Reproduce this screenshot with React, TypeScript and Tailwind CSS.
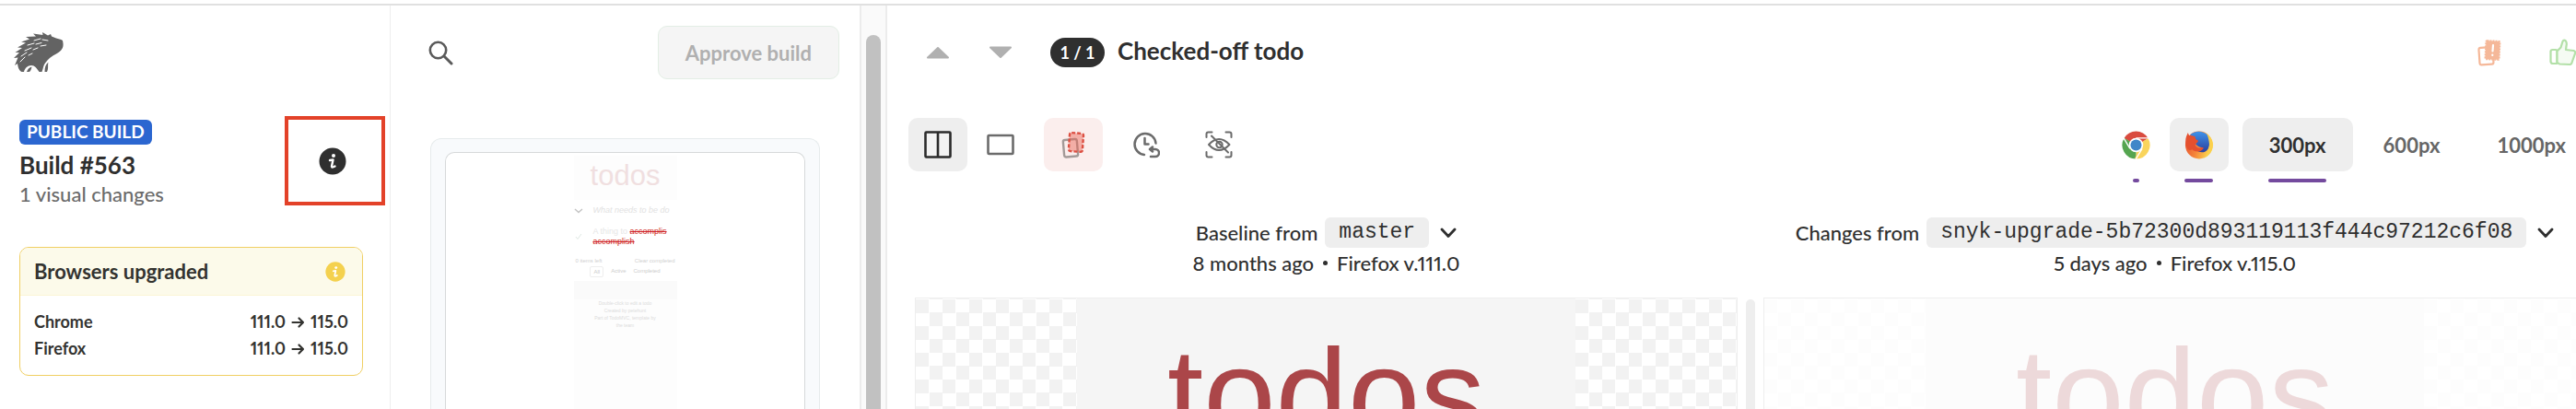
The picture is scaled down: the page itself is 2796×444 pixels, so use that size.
import type { ReactNode } from 'react';
import { clsx } from 'clsx';

const upgrades = [
  { browser: 'Chrome', from: '111.0', to: '115.0' },
  { browser: 'Firefox', from: '111.0', to: '115.0' },
];

const CHECKER =
  'bg-[repeating-conic-gradient(#ffffff_0%_25%,#f2f2f2_0%_50%)] bg-[length:29px_29px] bg-[position:0_1px]';

/* ---------- icons ---------- */

function HedgehogLogo() {
  return (
    <svg viewBox="0 0 54 43" className="h-[43px] w-[54px]" aria-hidden="true">
      <path
        fill="#636363"
        d="M53 9 C51 7 48 7.500 46 6.500 L41 4.500 L40 2 L37 3.500 L31 0 L31.500 3 L21 1.500 L24 4.500 L13 5 L17 7.500 L8 10.500 L13 11.500 L4 16.500 L9 17 L1.500 22 L6 22 L0 28 L4.500 27.500 L1 36 L4 34 C4.500 37 5 41 8.500 43 L11 43 C12 39 15 36 19 36 C23 36 24.500 39 27.500 43 L30.500 43 C32 39 32 36 34 33.500 C37 29 41 26 46 23.500 C52 20 54 17 53.500 12 Z"
      />
      <path fill="#636363" d="M14 43 C15 40 17 38 19.500 37.500 C19 40 18 43 16.500 43 Z M33.500 43 C33.500 38 34.500 35 37.500 32.500 C36.500 36 38 39 36 43 Z" />
      <path
        stroke="#fff"
        strokeWidth="1"
        strokeLinecap="round"
        d="M22 9 L29 7 M31 8 L37 9 M15 14 L22 12 M24 13 L30 11.500 M12 20 L19 17 M21 19 L26 17 M8 26 L14 22 M7 32 L12 27 M16 25 L20 23 M29 15 L35 14"
      />
    </svg>
  );
}

function InfoIcon({ className, fill }: { className: string; fill: string }) {
  return (
    <svg viewBox="0 0 30 30" className={className} aria-hidden="true">
      <circle cx="15" cy="15" r="14.500" fill={fill} />
      <circle cx="16" cy="9" r="2" fill="#fff" />
      <path d="M12 14 L15.500 13.500 L14 20.500 Q14 22.500 17.500 20.500" fill="none" stroke="#fff" strokeWidth="2.400" strokeLinecap="round" strokeLinejoin="round" />
    </svg>
  );
}

function SearchIcon() {
  return (
    <svg viewBox="0 0 27 27" className="h-[27px] w-[27px]" fill="none" stroke="#5a5a5a" aria-hidden="true">
      <circle cx="10.500" cy="10.500" r="8.700" strokeWidth="2.600" />
      <path d="M17 17 L25 25" strokeWidth="3" strokeLinecap="round" />
    </svg>
  );
}

function TriangleIcon({ down }: { down?: boolean }) {
  return (
    <svg viewBox="0 0 26 14" className="h-[14px] w-[26px]" fill="#b0b0b0" stroke="#b0b0b0" strokeWidth="2" strokeLinejoin="round" aria-hidden="true">
      {down ? <path d="M2 1.500 H24 L13 12 Z" /> : <path d="M2 12.500 H24 L13 2 Z" />}
    </svg>
  );
}

function ChevronIcon() {
  return (
    <svg viewBox="0 0 18 12" className="h-[12px] w-[18px]" fill="none" stroke="#2f2f2f" strokeWidth="2.800" strokeLinecap="round" strokeLinejoin="round" aria-hidden="true">
      <path d="M2 2 L9 9.500 L16 2" />
    </svg>
  );
}

function SplitIcon() {
  return (
    <svg viewBox="0 0 30 30" className="h-[30px] w-[30px]" aria-hidden="true">
      <rect x="1.500" y="1.500" width="27" height="27" rx="1" fill="#fff" fillOpacity="0.300" stroke="#2b2b2b" strokeWidth="2.600" />
      <path d="M15 1.500 V28.500" stroke="#2b2b2b" strokeWidth="2.600" />
    </svg>
  );
}

function SingleIcon() {
  return (
    <svg viewBox="0 0 30 30" className="h-[30px] w-[30px]" aria-hidden="true">
      <rect x="1.500" y="5" width="27" height="20" rx="1" fill="none" stroke="#6b6b6b" strokeWidth="2.600" />
    </svg>
  );
}

function DiffIcon() {
  return (
    <svg viewBox="0 0 30 30" className="h-[30px] w-[30px]" aria-hidden="true">
      <rect x="4.500" y="9.500" width="15" height="18.500" rx="2" fill="none" stroke="#a39a98" strokeWidth="2.400" transform="rotate(-5 12 19)" />
      <rect x="10.500" y="2.500" width="15" height="20" rx="2" fill="#e8604f" fillOpacity="0.450" stroke="#dc4f42" strokeWidth="2.400" strokeDasharray="4 2" transform="rotate(4 18 12)" />
    </svg>
  );
}

function HistoryIcon() {
  return (
    <svg viewBox="0 0 30 30" className="h-[30px] w-[30px]" fill="none" stroke="#6b6b6b" strokeWidth="2.500" strokeLinecap="round" strokeLinejoin="round" aria-hidden="true">
      <path d="M13 26 A11.500 11.500 0 1 1 25.500 13.500" />
      <path d="M13.500 8 V14.500 H17.500" />
      <path d="M22 17.500 L19 20 L22 22.500 M19 20 H25 A3.600 3.600 0 0 1 25 28 H20" />
    </svg>
  );
}

function HiddenRegionIcon() {
  return (
    <svg viewBox="0 0 30 30" className="h-[30px] w-[30px]" fill="none" stroke="#6b6b6b" strokeWidth="2" strokeLinecap="round" strokeLinejoin="round" aria-hidden="true">
      <path d="M1.500 7 V3.500 Q1.500 1.500 3.500 1.500 H7.500 M22.500 1.500 H26.500 Q28.500 1.500 28.500 3.500 V7 M28.500 23 V26.500 Q28.500 28.500 26.500 28.500 H22.500 M7.500 28.500 H3.500 Q1.500 28.500 1.500 26.500 V23" />
      <path d="M4 15 Q15 3 26.500 15 Q15 27 4 15 Z" />
      <circle cx="15.500" cy="15" r="3.200" />
      <path d="M7 5.500 L25 23.500" />
    </svg>
  );
}

function ChromeIcon() {
  return (
    <svg viewBox="0 0 32 32" className="h-[31px] w-[31px]" aria-hidden="true">
      <path fill="#d94b3f" d="M16 16 L2.600 8.200 A15.500 15.500 0 0 1 29.400 8.200 Z" />
      <path fill="#f9d45c" d="M16 16 L29.400 8.200 A15.500 15.500 0 0 1 16 31.500 Z" />
      <path fill="#55a550" d="M16 16 V31.500 A15.500 15.500 0 0 1 2.600 8.200 Z" />
      <path fill="#d94b3f" d="M16 8 H29.400 L22 13 Z" />
      <path fill="#f9d45c" d="M23 16 L16 31.500 L14.500 31 L20 20 Z" />
      <path fill="#55a550" d="M2.600 8.200 L9.500 20 L16 22 V16 Z" />
      <circle cx="16" cy="16" r="8" fill="#fff" />
      <path stroke="#fff" strokeWidth="1.400" d="M16 8.200 H30 M22.800 20 L15.500 32 M9.200 20 L2 7.800" />
      <circle cx="16" cy="16" r="6.200" fill="#3f86c8" />
    </svg>
  );
}

function FirefoxIcon() {
  return (
    <svg viewBox="0 0 32 32" className="h-[31px] w-[32px]" aria-hidden="true">
      <defs>
        <linearGradient id="ff-body" x1="0" y1="0" x2="1" y2="0.300">
          <stop offset="0" stopColor="#e4482f" />
          <stop offset="0.550" stopColor="#f5863a" />
          <stop offset="1" stopColor="#fbd350" />
        </linearGradient>
        <linearGradient id="ff-globe" x1="0" y1="0" x2="0" y2="1">
          <stop offset="0" stopColor="#3f93ea" />
          <stop offset="1" stopColor="#2a3f9d" />
        </linearGradient>
      </defs>
      <circle cx="16" cy="16" r="15.500" fill="url(#ff-body)" />
      <path fill="url(#ff-globe)" d="M6 4.500 C11 -0.500 20 -0.500 25 4.500 C28 8 28.500 15 26 20 C23 25 17 25 13 22 C17 22.500 19 20 20 18.500 C17 19 14 17 12 15 L14 11 C10 10 8 7 6 4.500 Z" />
      <path fill="#e4502f" d="M0.800 12 C0.500 8 2 5 3.500 2 C4 4 4.500 5 5.500 5.500 C8 5 10 5.500 12 7 C11 8.500 12 10 15 11 C15 13 12 14 11.500 15.500 C12 18 14.500 19.500 17 19 C19 18 20.500 18.500 21 19.500 C18 24 12 24.500 8 21 C4 24 1 18 0.800 12 Z" />
      <path fill="#fbd04c" d="M24.500 3 C30 7 31.500 13 31 18 C29.500 25 25 29 21 30.500 C27 25 28 18 27 12 C26.500 8.500 25.500 5 24.500 3 Z" />
    </svg>
  );
}

function RequestChangesIcon() {
  return (
    <svg viewBox="0 0 30 30" className="h-[30px] w-[30px]" aria-hidden="true">
      <rect x="4" y="9.500" width="15" height="18.500" rx="2" fill="none" stroke="#f5b899" strokeWidth="2.200" transform="rotate(-4 12 19)" />
      <rect x="11" y="2.500" width="15" height="20" rx="1" fill="#f5b899" stroke="#f5b899" strokeWidth="2" strokeDasharray="2 1" transform="rotate(3 18 12)" />
      <path d="M19 7 L18.500 13.500 M18.300 17.500 V18" stroke="#fff" strokeWidth="2.200" strokeLinecap="round" />
    </svg>
  );
}

function ThumbUpIcon() {
  return (
    <svg viewBox="0 0 30 30" className="h-[30px] w-[30px]" fill="none" stroke="#b3e0a8" strokeWidth="2.200" strokeLinecap="round" strokeLinejoin="round" aria-hidden="true">
      <path d="M1.500 14 Q1.500 12 3.500 12 H7 Q8.500 12 8.500 14 V27 H4 Q1.500 27 1.500 24.500 Z" />
      <path fill="#f5fbf3" d="M8.500 13.500 L12.500 9.500 L14.500 3 Q15.500 1 17.500 2 Q19.500 4 18.500 8 L18 12 L26.500 13 Q28.500 13.500 28 16 L24.500 26 Q24 28 22 28 L11 27.500 L8.500 25.500 Z" />
    </svg>
  );
}

/* ---------- building blocks ---------- */

interface ToolButtonProps {
  label: string;
  tone?: 'plain' | 'active' | 'danger';
  className?: string;
  children: ReactNode;
}

function ToolButton({ label, tone = 'plain', className, children }: ToolButtonProps) {
  return (
    <button
      type="button"
      aria-label={label}
      className={clsx(
        'flex h-[58px] w-16 shrink-0 items-center justify-center rounded-[10px]',
        tone === 'active' && 'bg-[#eeeeee]',
        tone === 'danger' && 'bg-[#fbeeed]',
        className,
      )}
    >
      {children}
    </button>
  );
}

function WidthButton({ label, active }: { label: string; active?: boolean }) {
  return (
    <div className="flex flex-col items-center gap-2">
      <button
        type="button"
        className={clsx(
          'h-[58px] rounded-[10px] px-[29px] text-[22px] font-bold',
          active ? 'bg-[#eeeeee] text-[#2f2f2f]' : 'text-[#666666]',
        )}
      >
        {label}
      </button>
      {active && <span className="h-1 w-[63px] rounded-full bg-[#744a9e]" />}
    </div>
  );
}

interface SnapshotPaneProps {
  title: string;
  branch: string;
  age: string;
  browser: string;
  faded?: boolean;
}

function SnapshotPane({ title, branch, age, browser, faded }: SnapshotPaneProps) {
  const checker = clsx('flex-1', CHECKER, faded && 'opacity-50');

  return (
    <section className="flex min-w-0 flex-1 flex-col">
      <div className="flex flex-col items-center text-[22px] font-medium text-[#2f2f2f]">
        <div className="flex h-[33px] items-center">
          <span className="whitespace-nowrap">{title}</span>
          <code className="ml-2 flex h-[33px] items-center rounded-md bg-[#eeeeee] px-[15px] font-['Liberation_Mono',monospace] text-[23px] font-normal">
            {branch}
          </code>
          <button type="button" aria-label={`Choose branch, ${branch}`} className="ml-3">
            <ChevronIcon />
          </button>
        </div>
        <p className="flex h-8 items-center gap-[10px] whitespace-nowrap proportional-nums">
          <span>{age}</span>
          <span className="h-[5px] w-[5px] rounded-full bg-[#2f2f2f]" />
          <span>{browser}</span>
        </p>
      </div>

      <div className="mt-[22px] flex flex-1 border border-[#eeeeee]">
        <div className={clsx('flex flex-1', faded && 'opacity-20')}>
          <div className={checker} />
          <div className="w-[541px] bg-[#f5f5f5] pt-[24px] text-center font-['Liberation_Sans',sans-serif] text-[141px] leading-[160px] text-[#ab4649]">
            todos
          </div>
          <div className={checker} />
        </div>
      </div>
    </section>
  );
}

function SnapshotThumbnail() {
  return (
    <div className="w-[112px] bg-[#fdfdfd] font-['Liberation_Sans',sans-serif]">
      <div className="h-12 pt-[6px] text-center text-[31px] leading-8 text-[#f0dfe0]">todos</div>
      <div className="flex h-6 items-center gap-[11px] bg-white text-[9px] italic text-[#e2e2e2]">
        <svg viewBox="0 0 10 6" className="h-[6px] w-[10px]" fill="none" stroke="#c4c4c4" strokeWidth="1.500" aria-hidden="true">
          <path d="M1 1 L5 4.500 L9 1" />
        </svg>
        <span className="whitespace-nowrap">What needs to be do</span>
      </div>
      <div className="flex h-8 items-center gap-[11px] bg-white text-[9px] leading-[11px]">
        <svg viewBox="0 0 10 10" className="h-[10px] w-[10px]" fill="none" stroke="#dfe8e3" aria-hidden="true">
          <path d="M2 5 L4 7.500 L8 2" />
        </svg>
        <p className="whitespace-nowrap">
          <span className="text-[#e6e6e6]">A thing to </span>
          <span className="text-[#cf1f24] line-through">accomplis</span>
          <br />
          <span className="text-[#cf1f24] line-through">accomplish</span>
        </p>
      </div>
      <div className="flex justify-between bg-white px-[2px] pt-1 text-[6px] leading-[12px] text-[#d0d0d0]">
        <span>0 items left</span>
        <span>Clear completed</span>
      </div>
      <div className="flex justify-center gap-2 bg-white pb-1 text-[6px] leading-[10px] text-[#cccccc]">
        <span className="rounded-xs border border-[#eeeeee] px-[3px]">All</span>
        <span>Active</span>
        <span>Completed</span>
      </div>
      <div className="h-5 bg-[#fafafa]" />
      <div className="h-48 text-center text-[5px] leading-[8px] text-[#dcdcdc]">
        Double-click to edit a todo
        <br />
        Created by petehunt
        <br />
        Part of TodoMVC, template by
        <br />
        the team
      </div>
    </div>
  );
}

/* ---------- page ---------- */

function BuildSidebar() {
  return (
    <aside className="w-[424px] shrink-0 border-r border-[#eeeeee] pl-[21px]">
      <a href="#home" aria-label="Home" className="-ml-[6px] mt-[29px] block w-[54px]">
        <HedgehogLogo />
      </a>

      <div className="mt-12 flex items-start justify-between pr-[5px]">
        <div className="pt-1">
          <span className="flex h-[27px] w-fit items-center rounded-md bg-[#2b66d0] px-2 text-[19px] font-bold text-white">
            PUBLIC BUILD
          </span>
          <h1 className="mt-[6px] text-[26px] leading-[32px] font-bold text-[#2f2f2f]">Build #563</h1>
          <p className="text-[22px] leading-[32px] font-medium text-[#6b6b6b]">1 visual changes</p>
        </div>
        <button
          type="button"
          aria-label="Build details"
          className="flex h-[97px] w-[109px] items-center justify-center border-4 border-[#e34229] pr-[6px]"
        >
          <InfoIcon className="h-[30px] w-[30px]" fill="#2f2f2f" />
        </button>
      </div>

      <section className="mt-[41px] mr-[29px] overflow-hidden rounded-[10px] border border-[#f0cf63] text-[#333330]">
        <header className="flex h-[52px] items-center justify-between border-b border-[#faf5d4] bg-[#fcfaea] pr-[18px] pl-[15px]">
          <h2 className="text-[22px] font-bold">Browsers upgraded</h2>
          <InfoIcon className="h-[22px] w-[22px]" fill="#f4d14f" />
        </header>
        <table className="my-[14px] w-full text-[18px] leading-[29px] font-bold">
          <tbody>
            {upgrades.map(({ browser, from, to }) => (
              <tr key={browser}>
                <th scope="row" className="pl-[15px] text-left">{browser}</th>
                <td className="pr-[15px]">
                  <div className="flex items-center justify-end gap-[6px] proportional-nums">
                    {from}
                    <svg viewBox="0 0 15 14" className="h-[14px] w-[15px]" fill="none" stroke="#333330" strokeWidth="2.200" strokeLinecap="round" strokeLinejoin="round" aria-label="to">
                      <path d="M1.500 7 H13 M8.500 2.500 L13 7 L8.500 11.500" />
                    </svg>
                    {to}
                  </div>
                </td>
              </tr>
            ))}
          </tbody>
        </table>
      </section>
    </aside>
  );
}

function SnapshotList() {
  return (
    <div className="flex w-[539px] shrink-0">
      <div className="flex min-w-0 flex-1 flex-col">
        <div className="mt-[22px] flex items-center justify-between pr-[22px] pl-[41px]">
          <button type="button" aria-label="Search snapshots">
            <SearchIcon />
          </button>
          <button
            type="button"
            disabled
            className="h-[58px] rounded-[10px] border border-[#e3eee5] bg-[#f5f5f5] px-[29px] text-[22px] font-bold text-[#b0b0b0]"
          >
            Approve build
          </button>
        </div>

        <div className="mx-[43px] mt-16 flex-1 rounded-t-xl border border-b-0 border-[#e6ebec] bg-[#f8fafc] px-[15px] pt-[14px]">
          <div className="flex h-full justify-center rounded-t-[10px] border border-b-0 border-[#d6d9da] bg-white pt-[3px]">
            <SnapshotThumbnail />
          </div>
        </div>
      </div>

      {/* scroll track */}
      <div className="flex w-[30px] justify-center border-x-2 border-[#ececec] bg-[#fafafa] pt-8">
        <div className="h-[420px] w-4 rounded-full bg-[#c1c1c1]" />
      </div>
    </div>
  );
}

export default function App() {
  return (
    <div className="h-screen overflow-hidden bg-white pt-1 font-['Lato',sans-serif]">
      <div className="flex h-full w-[calc(100%+41px)] border-t-2 border-[#e0e0e0]">
        <BuildSidebar />
        <SnapshotList />

        <main className="flex min-w-0 flex-1 flex-col">
          <div className="mt-[22px] flex items-center px-[23px]">
            <ToolButton label="Previous snapshot">
              <TriangleIcon />
            </ToolButton>
            <ToolButton label="Next snapshot" className="ml-1">
              <TriangleIcon down />
            </ToolButton>
            <span className="ml-[22px] flex h-8 w-[59px] items-center justify-center rounded-full bg-[#2f2f2f] text-[18px] font-bold text-white">
              1 / 1
            </span>
            <h2 className="ml-[14px] pb-1 text-[26px] leading-[32px] font-bold text-[#2f2f2f]">Checked-off todo</h2>
            <div className="ml-auto flex gap-4">
              <ToolButton label="Request changes">
                <RequestChangesIcon />
              </ToolButton>
              <ToolButton label="Approve snapshot">
                <ThumbUpIcon />
              </ToolButton>
            </div>
          </div>

          <div className="mt-[42px] flex h-[70px] items-start px-[23px]">
            <div className="flex gap-[15px]">
              <div className="flex gap-1">
                <ToolButton label="Side by side" tone="active">
                  <SplitIcon />
                </ToolButton>
                <ToolButton label="Single view">
                  <SingleIcon />
                </ToolButton>
              </div>
              <ToolButton label="Show diff" tone="danger">
                <DiffIcon />
              </ToolButton>
              <ToolButton label="History">
                <HistoryIcon />
              </ToolButton>
              <ToolButton label="Ignored regions">
                <HiddenRegionIcon />
              </ToolButton>
            </div>

            <div className="ml-auto flex gap-[15px]">
              <div className="flex gap-1">
                <div className="flex flex-col items-center gap-2">
                  <ToolButton label="Chrome">
                    <ChromeIcon />
                  </ToolButton>
                  <span className="h-1 w-[7px] rounded-full bg-[#744a9e]" />
                </div>
                <div className="flex flex-col items-center gap-2">
                  <ToolButton label="Firefox" tone="active">
                    <FirefoxIcon />
                  </ToolButton>
                  <span className="h-1 w-[31px] rounded-full bg-[#744a9e]" />
                </div>
              </div>
              <div className="flex gap-1">
                <WidthButton label="300px" active />
                <WidthButton label="600px" />
                <WidthButton label="1000px" />
              </div>
            </div>
          </div>

          <div className="mt-[38px] flex flex-1 px-[30px]">
            <SnapshotPane title="Baseline from" branch="master" age="8 months ago" browser="Firefox v.111.0" />
            <div className="mx-[9px] mt-[89px] w-[10px] rounded-t-full bg-[#eeeeee]" />
            <SnapshotPane
              title="Changes from"
              branch="snyk-upgrade-5b72300d893119113f444c97212c6f08"
              age="5 days ago"
              browser="Firefox v.115.0"
              faded
            />
          </div>
        </main>
      </div>
    </div>
  );
}
